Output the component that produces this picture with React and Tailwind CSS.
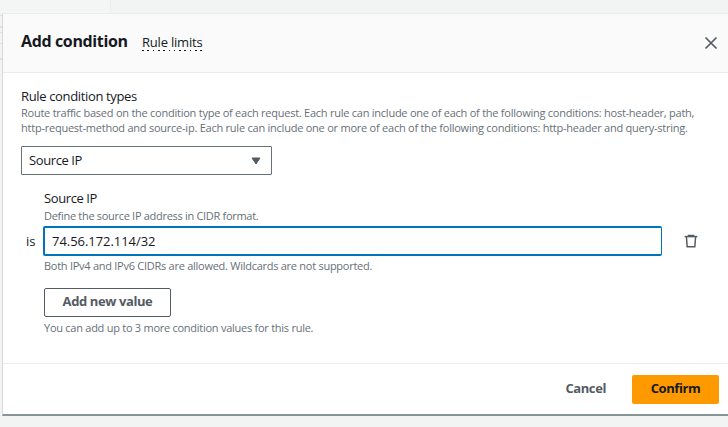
function CloseIcon() {
  return (
    <svg className="block size-4" viewBox="0 0 16 16" fill="none" stroke="#545b64" strokeWidth="1.7">
      <path d="M2.5 2.5l11 11M13.5 2.5l-11 11" />
    </svg>
  );
}

function TrashIcon() {
  return (
    <svg className="block size-4" viewBox="0 0 16 16" fill="none" stroke="#545b64" strokeWidth="1.5">
      <path d="M1.7 3.6h12.6" />
      <path d="M5.5 3V2.4h5V3" />
      <path d="M3.4 3.8l.8 10h7.6l.8-10" />
    </svg>
  );
}

function Hint({ children, className = "" }) {
  return (
    <p className={`whitespace-nowrap text-[11px] leading-[15px] text-[#687078] ${className}`}>
      {children}
    </p>
  );
}

function Header() {
  return (
    <header className="flex h-[59px] shrink-0 items-start border-b border-[#eaeded] bg-[#fafafa] pl-[18px] pr-[9px]">
      <h2 className="mt-[15px] w-[107px] whitespace-nowrap text-[16px] font-bold leading-[24px] tracking-[-0.36px]">Add condition</h2>
      <div className="ml-[14px] mt-[19px] flex w-[60px] flex-col">
        <span className="h-[17px] whitespace-nowrap text-[13px] leading-[18px] tracking-[-0.2px]">Rule limits</span>
        <span className="h-px bg-[repeating-linear-gradient(90deg,#16191f_0_1.6px,transparent_1.6px_5.3px)]" />
      </div>
      <button className="ml-auto mt-[21px]" aria-label="Close">
        <CloseIcon />
      </button>
    </header>
  );
}

function Body() {
  return (
    <main className="flex h-[290px] shrink-0 flex-col pl-[18px] pt-[15px]">
      <h3 className="-mt-px mb-px whitespace-nowrap text-[13px] leading-[18px] tracking-[-0.35px]">Rule condition types</h3>
      <div className="-mt-px mb-px">
        <Hint className="tracking-[-0.245px]">
          Route traffic based on the condition type of each request. Each rule can include one of each of the following conditions: host-header, path,
        </Hint>
        <Hint className="tracking-[-0.235px]">
          http-request-method and source-ip. Each rule can include one or more of each of the following conditions: http-header and query-string.
        </Hint>
      </div>
      <div className="mt-[10px] flex h-[29px] w-[251px] shrink-0 items-center justify-between rounded-[1px] border border-[#687078] pl-[7px] pr-[10px]">
        <span className="mb-[2px] text-[13px] leading-[18px] tracking-[-0.4px]">Source IP</span>
        <svg className="block h-2 w-[10px]" viewBox="0 0 10 8" fill="#545b64" stroke="#545b64" strokeLinejoin="round">
          <path d="M1 1h8L5 7z" />
        </svg>
      </div>
      <section className="ml-[22px] mt-[15px] flex flex-col">
        <h4 className="-mt-px mb-px pl-px text-[13px] leading-[18px] tracking-[-0.4px]">Source IP</h4>
        <Hint className="pl-px tracking-[-0.3px]">Define the source IP address in CIDR format.</Hint>
        <div className="-ml-[18px] mt-[3px] flex h-[30px] items-center">
          <span className="mb-px w-[18px] pl-px text-[13px] leading-[18px]">is</span>
          <div className="flex h-[30px] w-[619px] items-center rounded-[2px] border-x border-y-2 border-l-2 border-[#0073bb] pb-px pl-[7px] text-[13px] leading-[18px] tracking-[-0.05px]">
            74.56.172.114/32
          </div>
          <button className="ml-[21px]" aria-label="Remove">
            <TrashIcon />
          </button>
        </div>
        <Hint className="mb-px mt-[2px] pl-px tracking-[-0.265px]">Both IPv4 and IPv6 CIDRs are allowed. Wildcards are not supported.</Hint>
        <button className="ml-px mt-[14px] h-[29px] w-[127px] whitespace-nowrap rounded-[2px] border border-[#545b64] pb-[3px] text-[13px] font-bold leading-[18px] tracking-[-0.4px] text-[#545b64]">
          Add new value
        </button>
        <Hint className="mt-[3px] pl-px tracking-[-0.26px]">You can add up to 3 more condition values for this rule.</Hint>
      </section>
    </main>
  );
}

function Footer() {
  return (
    <footer className="flex h-[51px] shrink-0 items-start justify-end border-t border-[#eaeded] pr-[9px] pt-[11px] text-[13px] font-bold tracking-[-0.4px]">
      <button className="mr-[26px] h-[29px] pb-[2px] text-[#545b64]">Cancel</button>
      <button className="h-[29px] w-[87px] rounded-[2px] bg-[#ff9900] pb-[2px] text-[#16191f]">Confirm</button>
    </footer>
  );
}

function PageEdge() {
  return (
    <div className="flex w-[2px] shrink-0 flex-col text-[#dfe3e3]">
      <div className="mt-[2px] h-px bg-current" />
      <div className="mt-[10px] h-[2px] bg-current" />
      <div className="mt-[4px] h-px bg-current" />
      <div className="mt-[10px] h-px bg-current" />
      <div className="mt-[14px] h-[2px] bg-current" />
    </div>
  );
}

export default function App() {
  return (
    <div className="flex h-[427px] w-[728px] flex-col overflow-hidden bg-[#f2f3f3] font-['Open_Sans',sans-serif] text-[#16191f]">
      <div className="h-[13px] w-[111px] shrink-0 border-r border-[#eceeee] bg-[#f4f5f5]" />
      <div className="flex">
        <PageEdge />
        <div className="flex grow flex-col border-b-2 border-l border-t border-b-[#879596] border-l-[#d5dbdb] border-t-[#eaeded] bg-white">
          <Header />
          <Body />
          <Footer />
        </div>
      </div>
    </div>
  );
}
